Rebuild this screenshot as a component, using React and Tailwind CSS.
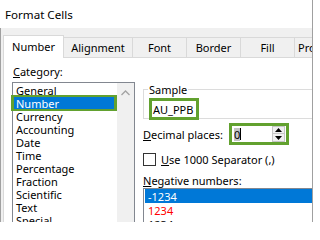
export default function App() {
  const cats = ["General", "Number", "Currency", "Accounting", "Date", "Time", "Percentage", "Fraction", "Scientific", "Text", "Special"];
  const green = "border-[#62a12f]";
  return (
    <div className="w-[313px] h-[222px] overflow-hidden bg-white flex flex-col border-r border-[#a0a0a0] font-['Noto_Sans',sans-serif] text-[11px] text-black leading-[13px] whitespace-nowrap">
      <div className="h-[28px] shrink-0 flex items-center pl-[5px] text-[11.6px]">Format Cells</div>
      <div className="flex-1 min-h-0 flex flex-col bg-[#f0f0f0] border-l border-[#a0a0a0] pl-[2px]">
        <div className="h-[29px] shrink-0 flex items-end">
          <div className="relative z-10 w-[61px] shrink-0 h-[23px] -mb-px bg-white border-x border-t border-[#d9d9d9] flex items-center justify-center pb-px">Number</div>
          <div className="w-[69px] shrink-0 h-[20px] border-t border-r border-[#d9d9d9] flex items-center justify-center">Alignment</div>
          <div className="w-[54px] shrink-0 h-[20px] border-t border-r border-[#d9d9d9] flex items-center justify-center">Font</div>
          <div className="w-[54px] shrink-0 h-[20px] border-t border-r border-[#d9d9d9] flex items-center justify-center">Border</div>
          <div className="w-[54px] shrink-0 h-[20px] border-t border-r border-[#d9d9d9] flex items-center justify-center">Fill</div>
          <div className="w-[60px] shrink-0 h-[20px] border-t border-r border-[#d9d9d9] flex items-center pl-[3px]">Protection</div>
        </div>
        <div className="flex-1 min-h-0 bg-white border-l border-t border-[#d9d9d9] flex items-start">
          <div className="ml-[8px] flex flex-col shrink-0">
            <div className="mt-[5px] h-[16px] shrink-0 flex items-center pl-px"><span className="underline">C</span>ategory:</div>
            <div className="mt-[3px] w-[123px] h-[160px] shrink-0 border border-[#828790] flex">
              <div className="w-[104px] pt-px flex flex-col">
                {cats.map((c) =>
                  c === "Number" ? (
                    <div key={c} className="relative h-[13px] shrink-0 flex items-center pl-[3px] bg-[#0078d7] text-white">
                      {c}
                      <div className={`absolute -left-[2px] right-0 -top-[2px] -bottom-px border-x-[3px] border-y-2 ${green}`} />
                    </div>
                  ) : (
                    <div key={c} className="h-[13px] shrink-0 flex items-center pl-[3px]">{c}</div>
                  )
                )}
              </div>
              <div className="w-[17px] bg-[#f0f0f0] flex justify-center pt-[7px]">
                <svg width="9" height="6" viewBox="0 0 9 6">
                  <path d="M0.5 5 L4.5 1 L8.5 5" fill="none" stroke="#a3a3a3" strokeWidth="1.3" />
                </svg>
              </div>
            </div>
          </div>
          <div className="ml-[8px] flex flex-col w-[200px] shrink-0">
            <div className="mt-[31px] h-[30px] shrink-0 border border-[#dcdcdc] relative">
              <div className="absolute -top-[8px] left-[4px] bg-white px-px h-[14px] flex items-center">Sample</div>
              <div className={`mt-[8px] ml-[5px] w-[50px] h-[22px] border-[3px] ${green} flex items-center pl-px`}>AU_PPB</div>
            </div>
            <div className="mt-[4px] h-[22px] shrink-0 flex items-center">
              <div className="w-[86px] shrink-0"><span className="underline">D</span>ecimal places:</div>
              <div className={`w-[60px] h-[22px] border-[3px] ${green} flex bg-white`}>
                <div className="flex-1 flex items-center pl-[2px]">
                  <span className="bg-[#c4c4c4] leading-[13px]">0</span>
                  <span className="w-px h-[12px] bg-black" />
                </div>
                <div className="w-[13px] mr-px flex flex-col">
                  <div className="h-[8px] bg-[#f0f0f0] border border-[#c6c6c6] flex items-center justify-center">
                    <svg width="7" height="4" viewBox="0 0 7 4"><path d="M0 4 L3.5 0 L7 4 Z" fill="#000" /></svg>
                  </div>
                  <div className="h-[8px] bg-[#f0f0f0] border border-t-0 border-[#c6c6c6] flex items-center justify-center">
                    <svg width="7" height="4" viewBox="0 0 7 4"><path d="M0 0 L3.5 4 L7 0 Z" fill="#000" /></svg>
                  </div>
                </div>
              </div>
            </div>
            <div className="mt-[6px] h-[16px] shrink-0 flex items-center">
              <div className="w-[13px] h-[13px] border border-[#333333] bg-white shrink-0" />
              <div className="ml-[5px]"><span className="underline">U</span>se 1000 Separator (,)</div>
            </div>
            <div className="mt-[5px] h-[16px] shrink-0 flex items-center">
              <span className="underline">N</span>egative numbers:
            </div>
            <div className="h-[60px] shrink-0 border border-[#828790] flex flex-col">
              <div className="h-[14px] shrink-0 ml-px flex items-center pl-[3px] bg-[#0078d7] text-white">-1234</div>
              <div className="h-[14px] shrink-0 flex items-center pl-[4px] text-[#ff0000]">1234</div>
              <div className="h-[14px] shrink-0 flex items-center pl-[4px]">1234</div>
            </div>
          </div>
        </div>
      </div>
    </div>
  );
}
